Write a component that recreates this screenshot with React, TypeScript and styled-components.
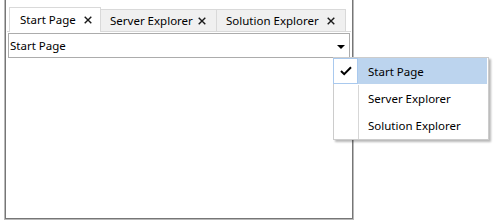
import { FC } from 'react';
import styled, { createGlobalStyle } from 'styled-components';

const GlobalStyle = createGlobalStyle`
  html, body {
    margin: 0;
    padding: 0;
    background: #ffffff;
  }
  body {
    font-family: "Noto Sans", "Open Sans", sans-serif;
    font-size: 11px;
    letter-spacing: 0;
    color: #000000;
  }
`;

type ITab = {
  title: string;
  width: number;
  selected?: boolean;
};

const tabs: ITab[] = [
  { title: 'Start Page', width: 92, selected: true },
  { title: 'Server Explorer', width: 117 },
  { title: 'Solution Explorer', width: 130 },
];

const menuItems = ['Start Page', 'Server Explorer', 'Solution Explorer'];

const CloseIcon = () => (
  <svg width="8" height="8" viewBox="0 0 8 8">
    <path d="M0.7 0.7 L7.3 7.3 M7.3 0.7 L0.7 7.3" stroke="#1a1a1a" strokeWidth="1.4" fill="none" />
  </svg>
);

const CheckIcon = () => (
  <svg width="12" height="10" viewBox="0 0 12 10">
    <path d="M1 5 L4.2 8.2 L11 1.2" stroke="#000" strokeWidth="2" fill="none" />
  </svg>
);

const Tab: FC<{ tab: ITab }> = ({ tab }) => (
  <StyledTab $width={tab.width} $selected={!!tab.selected}>
    <TabTitle>{tab.title}</TabTitle>
    <CloseIcon />
  </StyledTab>
);

const App = () => {
  return (
    <>
      <GlobalStyle />
      <Page>
        <Window>
          <TabStrip>
            {tabs.map((tab) => (
              <Tab key={tab.title} tab={tab} />
            ))}
          </TabStrip>
          <Body>
            <Combo>
              <ComboText>Start Page</ComboText>
              <Arrow />
            </Combo>
          </Body>
        </Window>
        <Menu>
          {menuItems.map((item, i) => (
            <MenuItem key={item}>
              <CheckCell $checked={i === 0}>{i === 0 && <CheckIcon />}</CheckCell>
              <ItemLabel $active={i === 0}>{item}</ItemLabel>
            </MenuItem>
          ))}
        </Menu>
      </Page>
    </>
  );
};

export default App;

/* Styles */

const Page = styled.div`
  position: relative;
  width: 501px;
  height: 224px;
  padding-left: 4px;
  box-sizing: border-box;
`;

const Window = styled.div`
  width: 350px;
  height: 220px;
  box-sizing: border-box;
  display: flex;
  flex-direction: column;
  border: 1px solid #b9b9b9;
  border-top: none;
  box-shadow: inset 1px 0 #767676, inset -1px 0 #767676, inset 0 -1px #767676;
  padding: 0 2px 2px 2px;
`;

const TabStrip = styled.div`
  display: flex;
  align-items: flex-end;
  height: 32px;
  padding: 7px 0 0 2px;
  box-sizing: border-box;
  border-bottom: 1px solid #d9d9d9;
`;

const StyledTab = styled.div<{ $width: number; $selected: boolean }>`
  display: flex;
  align-items: center;
  justify-content: space-between;
  box-sizing: border-box;
  width: ${(p) => p.$width}px;
  height: ${(p) => (p.$selected ? 25 : 22)}px;
  margin-bottom: ${(p) => (p.$selected ? -1 : 0)}px;
  margin-left: -1px;
  padding: ${(p) => (p.$selected ? '0 8px 1px 10px' : '0 10px 0 9px')};
  background: ${(p) => (p.$selected ? '#ffffff' : '#f0f0f0')};
  border: 1px solid #d9d9d9;
  border-bottom: none;
  position: relative;
  z-index: ${(p) => (p.$selected ? 1 : 0)};

  &:first-child {
    margin-left: 0;
  }
`;

const TabTitle = styled.span`
  white-space: nowrap;
  line-height: 16px;
  font-size: 11.5px;
`;

const Body = styled.div`
  flex: 1;
  padding: 1px 1px 0 1px;
  background: #ffffff;
`;

const Combo = styled.div`
  display: flex;
  align-items: center;
  justify-content: space-between;
  height: 25px;
  box-sizing: border-box;
  border: 1px solid #acacac;
  padding: 0 4px 0 1px;
`;

const ComboText = styled.span`
  line-height: 16px;
  font-size: 11.5px;
`;

const Arrow = styled.div`
  width: 0;
  height: 0;
  border-left: 4px solid transparent;
  border-right: 4px solid transparent;
  border-top: 4px solid #000;
  margin-top: 2px;
`;

const Menu = styled.div`
  position: absolute;
  left: 333px;
  top: 57px;
  width: 156px;
  box-sizing: border-box;
  border: 1px solid #cccccc;
  background: #ffffff;
  box-shadow: 2px 2px 2px rgba(0, 0, 0, 0.28);
  display: flex;
  flex-direction: column;
`;

const MenuItem = styled.div`
  display: flex;
  height: 27px;
`;

const CheckCell = styled.div<{ $checked: boolean }>`
  box-sizing: border-box;
  display: flex;
  align-items: center;
  justify-content: center;
  border: ${(p) => (p.$checked ? '1px solid #a9c9ee' : 'none')};
  margin: ${(p) => (p.$checked ? '0 0 1px -1px' : '0')};
  width: ${(p) => (p.$checked ? 25 : 24)}px;
`;

const ItemLabel = styled.div<{ $active: boolean }>`
  flex: 1;
  display: flex;
  align-items: center;
  padding-left: 9px;
  margin-right: 1px;
  margin-bottom: ${(p) => (p.$active ? 1 : 0)}px;
  background: ${(p) => (p.$active ? '#bcd4ee' : 'transparent')};
  border-left: 1px solid ${(p) => (p.$active ? '#bcd4ee' : '#d7d7d7')};
  font-size: 11.5px;
  white-space: nowrap;
`;
